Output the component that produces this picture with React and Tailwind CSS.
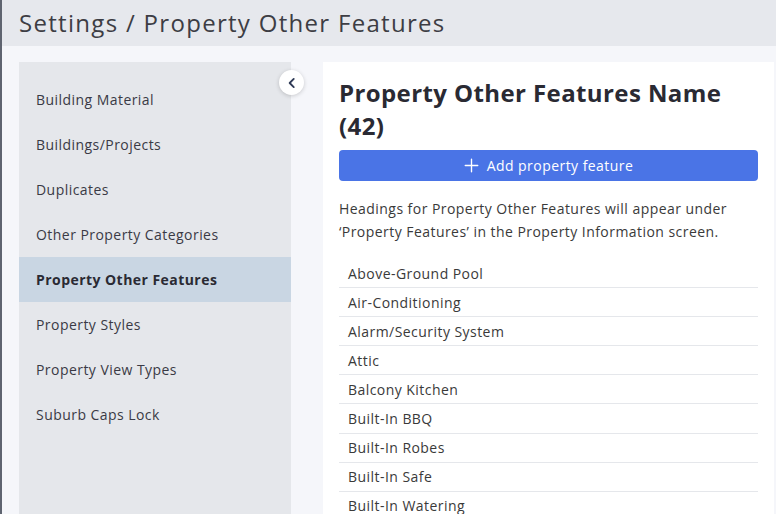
import React, { useState } from 'react'

const sections = [
  'Building Material',
  'Buildings/Projects',
  'Duplicates',
  'Other Property Categories',
  'Property Other Features',
  'Property Styles',
  'Property View Types',
  'Suburb Caps Lock',
]

const features = [
  'Above-Ground Pool',
  'Air-Conditioning',
  'Alarm/Security System',
  'Attic',
  'Balcony Kitchen',
  'Built-In BBQ',
  'Built-In Robes',
  'Built-In Safe',
  'Built-In Watering',
]

function App() {
  const [active, setActive] = useState('Property Other Features')

  return (
    <div className="w-[776px] h-[514px] overflow-hidden bg-[#f5f6fa] border-l-2 border-[#5f6470] font-['Open_Sans',sans-serif] text-[#33333d]">
      <header className="h-[46px] bg-[#e6e8ed] pl-[17px] flex items-center">
        <h1 className="text-[24px] text-[#3d3d44] tracking-[1.3px]">Settings / Property Other Features</h1>
      </header>

      <div className="flex pt-4 pl-[17px] pr-[2px] h-[468px]">
        <aside className="relative w-[272px] shrink-0 bg-[#e5e7eb] pt-[15px]">
          <button className="absolute -right-[13px] top-[8px] w-[25px] h-[25px] rounded-full bg-white shadow-[0_1px_4px_rgba(0,0,0,0.18)] flex items-center justify-center">
            <svg className="w-[14px] h-[14px] text-[#2f3a56]" fill="none" stroke="currentColor" viewBox="0 0 24 24">
              <path strokeLinecap="round" strokeLinejoin="round" strokeWidth={3.2} d="M15 5l-7 7 7 7" />
            </svg>
          </button>
          <nav>
            {sections.map((s) => (
              <div
                key={s}
                onClick={() => setActive(s)}
                className={`h-[45px] flex items-center pl-[17px] text-[14px] tracking-[0.45px] cursor-pointer ${
                  active === s ? 'bg-[#c9d6e3] font-bold text-[#2a2a33]' : 'text-[#3a3a45]'
                }`}
              >
                {s}
              </div>
            ))}
          </nav>
        </aside>

        <main className="flex-1 ml-8 bg-white px-4 pt-[14px]">
          <h2 className="text-[24px] leading-[33px] font-bold text-[#2a2a33] tracking-[0.4px] pr-8">
            Property Other Features Name (42)
          </h2>
          <button className="mt-[8px] w-full h-[31px] rounded bg-[#4a74e6] text-white text-[14px] tracking-[0.45px] flex items-center justify-center gap-2">
            <svg className="w-[15px] h-[15px]" fill="none" stroke="currentColor" viewBox="0 0 24 24">
              <path strokeLinecap="round" strokeWidth={2.2} d="M12 2v20M2 12h20" />
            </svg>
            Add property feature
          </button>
          <p className="mt-4 text-[14px] leading-[23px] tracking-[0.45px] text-[#3a3a3a]">
            Headings for Property Other Features will appear under ‘Property Features’ in the Property Information screen.
          </p>
          <ul className="mt-[16px]">
            {features.map((f) => (
              <li key={f} className="h-[29.1px] flex items-center pl-[9px] border-b border-[#e5e7eb] text-[14px] tracking-[0.45px] text-[#3a3a3a]">
                {f}
              </li>
            ))}
          </ul>
        </main>
      </div>
    </div>
  )
}

export default App
